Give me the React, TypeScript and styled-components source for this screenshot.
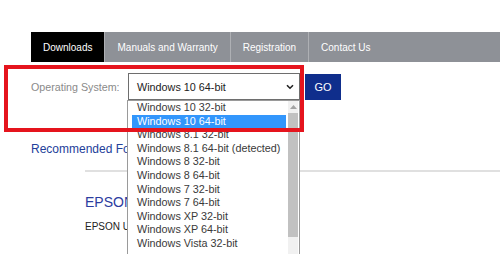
import React from "react";
import styled, { createGlobalStyle } from "styled-components";

const GlobalStyle = createGlobalStyle`
  html, body { margin: 0; padding: 0; background: #fff; }
  body { font-family: "Liberation Sans", Arial, sans-serif; }
  * { box-sizing: border-box; }
`;

const Page = styled.div`
  position: relative;
  width: 500px;
  height: 254px;
  overflow: hidden;
  padding: 32px 0 0 31px;
  background: #fff;
`;

const Nav = styled.nav`
  display: flex;
  height: 30px;
  background: #8e9197;
`;

const Tab = styled.div<{ $active?: boolean }>`
  display: flex;
  align-items: center;
  padding: 0 12px;
  font-size: 10px;
  color: #fff;
  background: ${(p) => (p.$active ? "#000" : "transparent")};
  border-left: ${(p) => (p.$active ? "none" : "1.5px solid #aeb0b4")};
  white-space: nowrap;
`;

const FormRow = styled.div`
  display: flex;
  align-items: center;
  height: 27px;
  margin-top: 11px;
`;

const Label = styled.span`
  width: 97px;
  font-size: 10.7px;
  color: #8a8a8a;
`;

const SelectBox = styled.div`
  position: relative;
  display: flex;
  align-items: center;
  justify-content: space-between;
  width: 172px;
  height: 27px;
  padding: 0 5px 0 8px;
  border: 1px solid #6e6e6e;
  font-size: 10.8px;
  color: #222;
  background: #fff;
`;

const GoButton = styled.button`
  align-self: flex-end;
  width: 36px;
  height: 26px;
  margin-left: 5px;
  border: none;
  background: #0f2e8c;
  color: #fff;
  font-family: "Liberation Sans", Arial, sans-serif;
  font-size: 11px;
  padding: 0;
`;

const Dropdown = styled.div`
  position: absolute;
  top: calc(100% + 1px);
  left: -2px;
  width: 173px;
  height: 160px;
  display: flex;
  background: #fff;
  border: 1px solid #9a9a9a;
  z-index: 2;
`;

const Options = styled.ul`
  flex: 1;
  list-style: none;
  margin: 0;
  padding: 0 2px 0 4px;
`;

const Option = styled.li<{ $selected?: boolean }>`
  height: 13.6px;
  line-height: 13.6px;
  padding-left: 5px;
  font-size: 10.8px;
  white-space: nowrap;
  color: ${(p) => (p.$selected ? "#fff" : "#3a3a3a")};
  background: ${(p) => (p.$selected ? "#3296fc" : "transparent")};
`;

const Scrollbar = styled.div`
  display: flex;
  flex-direction: column;
  width: 10px;
  margin-right: 1px;
  background: #f1f1f1;
`;

const ScrollArrow = styled.div`
  display: flex;
  align-items: center;
  justify-content: center;
  height: 12px;
`;

const Thumb = styled.div`
  height: 124px;
  background: #c1c1c1;
`;

const Recommended = styled.div`
  margin-top: 42px;
  font-size: 12px;
  line-height: 14px;
  color: #23409a;
`;

const Divider = styled.div`
  height: 2px;
  margin: 14px 0 0 54px;
  background: #e0e0e0;
`;

const Heading = styled.div`
  margin: 22px 0 0 54px;
  font-size: 14px;
  line-height: 16px;
  color: #2c3ca0;
`;

const SmallText = styled.div`
  margin: 11px 0 0 54px;
  font-size: 10px;
  line-height: 12px;
  color: #222;
`;

const Highlight = styled.div`
  position: absolute;
  left: 4px;
  top: 65px;
  width: 300px;
  height: 67px;
  border: 4px solid #e5141d;
  pointer-events: none;
  z-index: 3;
`;

const options = [
  "Windows 10 32-bit",
  "Windows 10 64-bit",
  "Windows 8.1 32-bit",
  "Windows 8.1 64-bit (detected)",
  "Windows 8 32-bit",
  "Windows 8 64-bit",
  "Windows 7 32-bit",
  "Windows 7 64-bit",
  "Windows XP 32-bit",
  "Windows XP 64-bit",
  "Windows Vista 32-bit",
];

export default function App() {
  return (
    <>
      <GlobalStyle />
      <Page>
        <Nav>
          <Tab $active>Downloads</Tab>
          <Tab>Manuals and Warranty</Tab>
          <Tab>Registration</Tab>
          <Tab>Contact Us</Tab>
        </Nav>
        <FormRow>
          <Label>Operating System:</Label>
          <SelectBox>
            <span>Windows 10 64-bit</span>
            <svg width="8" height="6" viewBox="0 0 8 6">
              <path d="M1 1.2 L4 4.2 L7 1.2" fill="none" stroke="#222" strokeWidth="1.6" />
            </svg>
            <Dropdown>
              <Options>
                {options.map((o) => (
                  <Option key={o} $selected={o === "Windows 10 64-bit"}>
                    {o}
                  </Option>
                ))}
              </Options>
              <Scrollbar>
                <ScrollArrow>
                  <svg width="7" height="4" viewBox="0 0 7 4">
                    <path d="M0 4 L3.5 0 L7 4 Z" fill="#a3a3a3" />
                  </svg>
                </ScrollArrow>
                <Thumb />
              </Scrollbar>
            </Dropdown>
          </SelectBox>
          <GoButton>GO</GoButton>
        </FormRow>
        <Recommended>Recommended For You</Recommended>
        <Divider />
        <Heading>EPSON Software Updater</Heading>
        <SmallText>EPSON Utility software</SmallText>
        <Highlight />
      </Page>
    </>
  );
}
